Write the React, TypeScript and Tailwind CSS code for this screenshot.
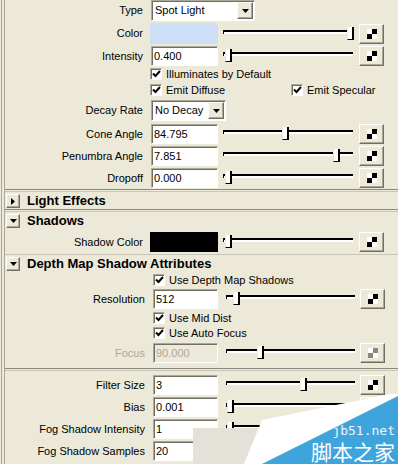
import React from "react";

const raised =
  "border border-t-white border-l-white border-b-[#716f64] border-r-[#716f64] shadow-[inset_-1px_-1px_0_#aca899] bg-[#ece9d8]";
const sunken =
  "border border-t-[#aca899] border-l-[#aca899] border-b-white border-r-white shadow-[inset_1px_1px_0_#716f64]";

const Label = ({ text, wide, dim }: { text: string; wide?: boolean; dim?: boolean }) => (
  <span
    className={`${wide ? "w-[140px]" : "w-[138px]"} shrink-0 text-right whitespace-nowrap ${
      dim ? "text-[#aca899]" : "text-black"
    }`}
  >
    {text}
  </span>
);

const Field = ({ value, wide, dim }: { value: string; wide?: boolean; dim?: boolean }) => (
  <div
    className={`${sunken} ${wide ? "ml-[8px] w-[65px]" : "ml-[8px] w-[67px]"} h-[20px] flex items-center pl-[2px] ${
      dim ? "bg-[#ece9d8] text-[#aca899]" : "bg-white text-black"
    }`}
  >
    {value}
  </div>
);

const Slider = ({ pos, wide }: { pos: number; wide?: boolean }) => (
  <div className={`relative h-[14px] ${wide ? "ml-[8px] w-[129px]" : "ml-[5px] w-[130px]"}`}>
    <div className="absolute left-0 right-0 top-[3px] h-[4px] border-t-2 border-t-black border-l border-l-black bg-white" />
    <div
      className="absolute top-0 h-[13px] w-[7px] bg-white border-r-2 border-b border-r-black border-b-black border-l border-l-[#ece9d8]"
      style={{ left: pos }}
    />
  </div>
);

const MapBtn = ({ dim, wide }: { dim?: boolean; wide?: boolean }) => (
  <div className={`${raised} ${wide ? "ml-[5px]" : "ml-[6px]"} w-[25px] h-[20px] flex items-center justify-center`}>
    <div className="grid grid-cols-2 w-[10px] h-[10px]">
      <div className="bg-white" />
      <div className={dim ? "bg-[#8a877c]" : "bg-black"} />
      <div className={dim ? "bg-[#8a877c]" : "bg-black"} />
      <div className="bg-white" />
    </div>
  </div>
);

const Check = () => (
  <div className={`${sunken} bg-white w-[12px] h-[12px] shrink-0 flex items-center justify-center`}>
    <svg width="9" height="8" viewBox="0 0 9 8">
      <path d="M1 3.5 L3.5 6 L8 1" stroke="black" strokeWidth="2" fill="none" />
    </svg>
  </div>
);

const Drop = ({ value, w }: { value: string; w: string }) => (
  <div className={`${sunken} bg-white ml-[8px] ${w} h-[21px] flex items-center justify-between pl-[3px] pr-[1px]`}>
    <span>{value}</span>
    <div className={`${raised} w-[16px] h-[17px] flex items-center justify-center`}>
      <svg width="7" height="4" viewBox="0 0 7 4">
        <path d="M0 0 H7 L3.5 4 Z" fill="black" />
      </svg>
    </div>
  </div>
);

const Header = ({ text, open, h }: { text: string; open?: boolean; h: string }) => (
  <div className={`flex items-center ${h}`}>
    <div className={`${raised} ml-[1px] w-[14px] h-[14px] flex items-center justify-center`}>
      {open ? (
        <svg width="7" height="4" viewBox="0 0 7 4">
          <path d="M0 0 H7 L3.5 4 Z" fill="black" />
        </svg>
      ) : (
        <svg width="4" height="7" viewBox="0 0 4 7">
          <path d="M0 0 V7 L4 3.5 Z" fill="black" />
        </svg>
      )}
    </div>
    <span className="ml-[7px] text-[13px] font-bold text-black">{text}</span>
  </div>
);

const Sep = ({ className }: { className: string }) => (
  <div className={`${className} h-[3px] border-t border-t-[#8a877c] border-b border-b-[#c9c6b7]`} />
);

export default function App() {
  return (
    <div className="relative w-[398px] h-[464px] overflow-hidden bg-[#ece9d8] flex font-['Liberation_Sans',Arial,sans-serif] text-[11px]">
      <div className="ml-[1px] w-[4px] shrink-0 border-l border-r border-l-[#aca899] border-r-[#aca899]" />
      <div className="flex-1 flex flex-col">
        <div className="flex items-center h-[21px]">
          <Label text="Type" />
          <Drop value="Spot Light" w="w-[104px]" />
        </div>
        <div className="flex items-center h-[21px] mt-[2px]">
          <Label text="Color" />
          <div className="ml-[7px] w-[68px] h-[21px] bg-[#cddff7]" />
          <Slider pos={124} />
          <MapBtn />
        </div>
        <div className="flex items-center h-[20px] mt-[2px]">
          <Label text="Intensity" />
          <Field value="0.400" />
          <Slider pos={2} />
          <MapBtn />
        </div>
        <div className="flex items-center h-[14px] mt-[1px]">
          <div className="w-[145px] shrink-0" />
          <Check />
          <span className="ml-[4px]">Illuminates by Default</span>
        </div>
        <div className="flex items-center h-[14px] mt-[2px]">
          <div className="w-[145px] shrink-0" />
          <div className="w-[141px] flex items-center">
            <Check />
            <span className="ml-[4px]">Emit Diffuse</span>
          </div>
          <Check />
          <span className="ml-[4px]">Emit Specular</span>
        </div>
        <div className="flex items-center h-[21px] mt-[3px]">
          <Label text="Decay Rate" />
          <Drop value="No Decay" w="w-[75px]" />
        </div>
        <div className="flex items-center h-[20px] mt-[3px]">
          <Label text="Cone Angle" />
          <Field value="84.795" />
          <Slider pos={59} />
          <MapBtn />
        </div>
        <div className="flex items-center h-[20px] mt-[2px]">
          <Label text="Penumbra Angle" />
          <Field value="7.851" />
          <Slider pos={110} />
          <MapBtn />
        </div>
        <div className="flex items-center h-[20px] mt-[2px]">
          <Label text="Dropoff" />
          <Field value="0.000" />
          <Slider pos={2} />
          <MapBtn />
        </div>
        <Sep className="mt-[1px]" />
        <Header text="Light Effects" h="h-[16px] mt-[1px]" />
        <Sep className="mt-0" />
        <Header text="Shadows" open h="h-[18px]" />
        <div className="flex items-center h-[20px] mt-[2px]">
          <Label text="Shadow Color" />
          <div className="ml-[7px] w-[68px] h-[20px] bg-black" />
          <Slider pos={2} />
          <MapBtn />
        </div>
        <div className="mt-[2px] border-t border-t-[#c9c6b7]">
          <Header text="Depth Map Shadow Attributes" open h="h-[18px]" />
        </div>
        <div className="flex items-center h-[14px]">
          <div className="w-[148px] shrink-0" />
          <Check />
          <span className="ml-[4px]">Use Depth Map Shadows</span>
        </div>
        <div className="flex items-center h-[20px] mt-[2px]">
          <Label text="Resolution" wide />
          <Field value="512" wide />
          <Slider pos={7} wide />
          <MapBtn wide />
        </div>
        <div className="flex items-center h-[14px] mt-[2px]">
          <div className="w-[148px] shrink-0" />
          <Check />
          <span className="ml-[4px]">Use Mid Dist</span>
        </div>
        <div className="flex items-center h-[14px] mt-[1px]">
          <div className="w-[148px] shrink-0" />
          <Check />
          <span className="ml-[4px]">Use Auto Focus</span>
        </div>
        <div className="flex items-center h-[20px] mt-[3px]">
          <Label text="Focus" wide dim />
          <Field value="90.000" wide dim />
          <Slider pos={31} wide />
          <MapBtn wide dim />
        </div>
        <Sep className="mt-[5px]" />
        <div className="flex items-center h-[20px] mt-[4px]">
          <Label text="Filter Size" wide />
          <Field value="3" wide />
          <Slider pos={74} wide />
          <MapBtn wide />
        </div>
        <div className="flex items-center h-[20px] mt-[2px]">
          <Label text="Bias" wide />
          <Field value="0.001" wide />
          <Slider pos={1} wide />
          <MapBtn wide />
        </div>
        <div className="flex items-center h-[20px] mt-[2px]">
          <Label text="Fog Shadow Intensity" wide />
          <Field value="1" wide />
          <Slider pos={1} wide />
          <MapBtn wide />
        </div>
        <div className="flex items-center h-[20px] mt-[2px]">
          <Label text="Fog Shadow Samples" wide />
          <Field value="20" wide />
          <Slider pos={1} wide />
          <MapBtn wide />
        </div>
      </div>

      {/* watermark */}
      <svg className="absolute left-0 top-0 pointer-events-none" width="398" height="464" viewBox="0 0 398 464">
        <polygon points="193,428 272,428 252,464 193,464" fill="#e3e1d8" />
        <polygon points="262,420 390,394 398,394 398,398 262,464 244,464" fill="#ffffff" />
        <polygon points="398,396 398,464 262,464" fill="#3fa4dc" />
      </svg>
      <div className="absolute right-[3px] top-[424px] text-[13px] leading-[13px] text-white/90 font-['DejaVu_Sans_Mono',monospace]">
        jb51.net
      </div>
      <div className="absolute right-[3px] top-[440px] text-[21px] leading-[22px] text-white font-['Noto_Sans_CJK_SC',sans-serif]">
        脚本之家
      </div>
    </div>
  );
}
